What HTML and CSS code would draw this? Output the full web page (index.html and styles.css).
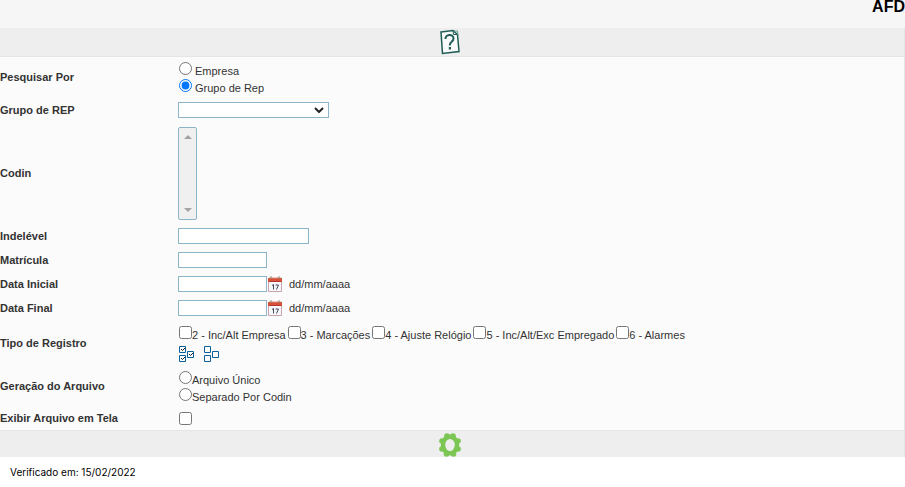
FILE: index.html
```html
<!DOCTYPE html>
<html lang="pt-BR">
<head>
<meta charset="utf-8">
<title>AFD</title>
<link rel="stylesheet" href="styles.css">
</head>
<body>
<header class="header"><h1 class="title">AFD</h1></header>
<form class="panel">
  <div class="bar bar-top">
    <button type="button" class="icon-btn" aria-label="Ajuda">
      <svg width="20" height="26" viewBox="0 0 20 26" fill="none" stroke="#1f5c55" stroke-width="1.5">
        <path d="M1 3 L13 1.500 L17.500 5.500 L19 22.500 L2.500 24.500 Z" fill="#fafafa"/>
        <path d="M13 1.500 L13.500 5.500 L17.500 5.500" stroke-width="1"/>
        <path d="M14 2 H17.500 L18 6" stroke-width="1" stroke="#6d9892"/>
        <path d="M5.500 10 C5 5 13.500 4.500 13.500 9.500 C13.500 13 9.500 12.500 9.700 16.500" stroke-width="2"/>
        <path d="M9.900 18 v2.500" stroke-width="2.200"/>
      </svg>
    </button>
  </div>
  <div class="row row-double">
    <span class="label">Pesquisar Por</span>
    <div class="field options spaced">
      <label class="option"><input type="radio" name="pesquisa"><span>Empresa</span></label>
      <label class="option"><input type="radio" name="pesquisa" checked><span>Grupo de Rep</span></label>
    </div>
  </div>
  <div class="row">
    <label class="label" for="grupo">Grupo de REP</label>
    <div class="field select-wrap">
      <select id="grupo" class="box select"><option></option></select>
      <svg class="chevron" width="10" height="6" viewBox="0 0 10 6" fill="none" stroke="#222" stroke-width="2"><path d="M1 1 L5 5 L9 1"/></svg>
    </div>
  </div>
  <div class="row row-list">
    <label class="label" for="codin">Codin</label>
    <div class="field list-wrap">
      <select id="codin" class="list" multiple></select>
      <svg class="arrow arrow-up" width="8" height="4" viewBox="0 0 8 4" fill="#a3a3a3"><path d="M4 0 L8 4 H0 Z"/></svg>
      <svg class="arrow arrow-down" width="8" height="4" viewBox="0 0 8 4" fill="#a3a3a3"><path d="M0 0 H8 L4 4 Z"/></svg>
    </div>
  </div>
  <div class="row">
    <label class="label" for="indelevel">Indelével</label>
    <div class="field"><input id="indelevel" class="box wide" type="text"></div>
  </div>
  <div class="row">
    <label class="label" for="matricula">Matrícula</label>
    <div class="field"><input id="matricula" class="box" type="text"></div>
  </div>
  <div class="row">
    <label class="label" for="inicial">Data Inicial</label>
    <div class="field date">
      <input id="inicial" class="box" type="text">
      <button type="button" class="icon-btn" aria-label="Calendário"><svg width="14" height="16" viewBox="0 0 14 16"><path d="M.5 3 H13.500 V15.500 H.5 Z" fill="#f7f7fb" stroke="#c9a3ab"/><path d="M0 2 H14 V6 H0 Z" fill="#d9503a"/><path d="M1 5.500 H13" stroke="#b5392c"/><path d="M2 3 V1 H4 V3 M10 3 V1 H12 V3" fill="none" stroke="#a68e7d"/><path d="M5 2 H9" stroke="#ef8b73"/><path d="M4 9.500 L5.500 8.500 V13.500 M7.500 9 H10.500 L8.500 13.500" fill="none" stroke="#444b58"/></svg></button>
      <span>dd/mm/aaaa</span>
    </div>
  </div>
  <div class="row">
    <label class="label" for="final">Data Final</label>
    <div class="field date">
      <input id="final" class="box" type="text">
      <button type="button" class="icon-btn" aria-label="Calendário"><svg width="14" height="16" viewBox="0 0 14 16"><path d="M.5 3 H13.500 V15.500 H.5 Z" fill="#f7f7fb" stroke="#c9a3ab"/><path d="M0 2 H14 V6 H0 Z" fill="#d9503a"/><path d="M1 5.500 H13" stroke="#b5392c"/><path d="M2 3 V1 H4 V3 M10 3 V1 H12 V3" fill="none" stroke="#a68e7d"/><path d="M5 2 H9" stroke="#ef8b73"/><path d="M4 9.500 L5.500 8.500 V13.500 M7.500 9 H10.500 L8.500 13.500" fill="none" stroke="#444b58"/></svg></button>
      <span>dd/mm/aaaa</span>
    </div>
  </div>
  <div class="row row-types">
    <span class="label">Tipo de Registro</span>
    <div class="field">
      <div class="types">
        <label class="option"><input type="checkbox"><span>2 - Inc/Alt Empresa</span></label>
        <label class="option"><input type="checkbox"><span>3 - Marcações</span></label>
        <label class="option"><input type="checkbox"><span>4 - Ajuste Relógio</span></label>
        <label class="option"><input type="checkbox"><span>5 - Inc/Alt/Exc Empregado</span></label>
        <label class="option"><input type="checkbox"><span>6 - Alarmes</span></label>
      </div>
      <div class="toggles">
        <button type="button" class="icon-btn" aria-label="Marcar todos"><svg width="15" height="16" viewBox="0 0 15 16" fill="#fff" stroke="#0b6099"><path d="M.5 .5 h6 v6 h-6 z M.5 9.500 h6 v6 h-6 z M8.500 5.500 h6 v6 h-6 z"/><path d="M2 3 l1.500 1.500 L6 2 M2 12 l1.500 1.500 L6 11 M10 8 l1.500 1.500 L14 7" fill="none" stroke="#222"/></svg></button>
        <button type="button" class="icon-btn" aria-label="Desmarcar todos"><svg width="15" height="16" viewBox="0 0 15 16" fill="#fff" stroke="#0b6099"><path d="M.5 .5 h6 v6 h-6 z M.5 9.500 h6 v6 h-6 z M8.500 5.500 h6 v6 h-6 z"/></svg></button>
      </div>
    </div>
  </div>
  <div class="row row-double">
    <span class="label">Geração do Arquivo</span>
    <div class="field options">
      <label class="option"><input type="radio" name="geracao"><span>Arquivo Único</span></label>
      <label class="option"><input type="radio" name="geracao"><span>Separado Por Codin</span></label>
    </div>
  </div>
  <div class="row row-single">
    <label class="label" for="exibir">Exibir Arquivo em Tela</label>
    <div class="field"><input id="exibir" type="checkbox"></div>
  </div>
  <div class="bar bar-bottom">
    <button type="button" class="icon-btn" aria-label="Processar">
      <svg width="22" height="24" viewBox="0 0 22 24" fill="#7cc653">
        <ellipse cx="11" cy="12" rx="7" ry="8.300" fill="none" stroke="#7cc653" stroke-width="4.500"/>
        <circle cx="14" cy="3" r="2.800"/><circle cx="8" cy="3" r="2.800"/>
        <circle cx="19" cy="8" r="2.800"/><circle cx="3" cy="8" r="2.800"/>
        <circle cx="19" cy="16" r="2.800"/><circle cx="3" cy="16" r="2.800"/>
        <circle cx="14.500" cy="21" r="2.800"/><circle cx="7.500" cy="21" r="2.800"/>
      </svg>
    </button>
  </div>
</form>
<footer class="footer">Verificado em: 15/02/2022</footer>
</body>
</html>
```
FILE: styles.css
```css
* { box-sizing: border-box; }
body { margin: 0; background: #fff; color: #333; font: 11px/17px "Liberation Sans", Arial, sans-serif; }
.header { height: 28px; background: #f6f6f6; text-align: right; }
.title { margin: 0; font-size: 16px; line-height: 14px; color: #000; }
.panel { margin: 0; background: #fbfbfb; border-right: 1px solid #e5e5e5; }
.bar { display: flex; align-items: center; justify-content: center; background: #eee; padding-right: 4px; }
.bar-top { height: 29px; border-bottom: 1px solid #e5e5e5; }
.bar-bottom { height: 27px; border-top: 1px solid #e5e5e5; padding-top: 2px; }
.icon-btn { display: block; padding: 0; border: 0; background: none; line-height: 0; }
.icon-btn svg { display: block; }
.row { display: grid; grid-template-columns: 178px 1fr; align-items: center; min-height: 24px; }
.row-double { min-height: 41px; }
.row-single { min-height: 23px; }
.row-list { min-height: 102px; }
.row-types { min-height: 46px; }
.label { font-weight: bold; }
input[type="radio"], input[type="checkbox"] { display: block; flex: none; width: 13px; height: 13px; margin: 0 0 0 1px; }
.options { display: grid; }
.option { display: flex; height: 17px; align-items: flex-start; }
.option input { margin-top: 1px; }
.option span { padding-top: 2px; }
.spaced .option { gap: 3px; }
.box { display: block; width: 89px; height: 16px; margin: 0; padding: 0 2px; border: 1px solid #8db5c9; border-radius: 0; background: #fff; font: inherit; }
.wide { width: 131px; }
.select-wrap, .list-wrap { position: relative; justify-self: start; }
.select { width: 151px; appearance: none; }
.chevron { position: absolute; right: 5px; top: 5px; pointer-events: none; }
.list { display: block; appearance: none; width: 19px; height: 93px; padding: 0; border: 1px solid #8db5c9; border-radius: 2px; background: #f0f0f0; overflow: hidden; }
.arrow { position: absolute; left: 6px; pointer-events: none; }
.arrow-up { top: 8px; }
.arrow-down { bottom: 8px; }
.date { display: flex; align-items: center; gap: 1px; }
.date span { margin-left: 6px; }
.types { display: flex; flex-wrap: wrap; gap: 0 1px; }
.toggles { display: flex; gap: 10px; padding: 4px 0 0 1px; }
.footer { padding: 7px 10px; font-family: Inter, "Liberation Sans", sans-serif; font-size: 10px; color: #000; }
```
